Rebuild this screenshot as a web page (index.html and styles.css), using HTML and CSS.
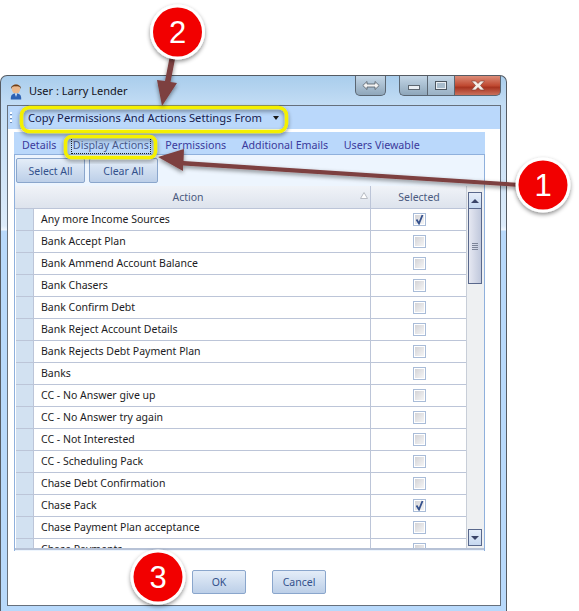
FILE: index.html
```html
<!DOCTYPE html>
<html lang="en">
<head>
<meta charset="utf-8">
<title>User : Larry Lender</title>
<link rel="stylesheet" href="styles.css">
</head>
<body>
<div class="window">
  <div class="titlebar">
    <svg class="app-icon" width="12" height="17" viewBox="0 0 12 17"><ellipse cx="6" cy="6" rx="4.200" ry="4.600" fill="#eab88c"/><path d="M1 6C.5 0 11.500 0 11 6 10 3.500 8 3 6 3.500 4 3 2 3.500 1 6z" fill="#6e3f18"/><path d="M.8 16.500C.5 12 2.500 10.500 6 10.500s5.500 1.500 5.200 6z" fill="#2e62b4"/><path d="M5 10.500h2l-1 3.500z" fill="#fff"/></svg>
    <span class="title">User : Larry Lender</span>
    <div class="help-btn"><svg width="18" height="11" viewBox="0 0 18 11"><path d="M.8 5.500 5 1.500V4h8V1.500l4.200 4-4.200 4V7H5v2.500z" fill="#f2f2f2" stroke="#505a66" stroke-width=".8"/></svg></div>
    <div class="win-btns">
      <div class="wb wb-min"><span class="min-glyph"></span></div>
      <div class="wb wb-max"><span class="max-glyph"></span></div>
      <div class="wb wb-close"><svg width="16" height="11" viewBox="0 0 16 11"><path d="M1.500 1h4L8 3.500 10.500 1h4L10.500 5.500l4 4.500h-4L8 7.500 5.500 10h-4l4-4.500z" fill="#f4eee8" stroke="#7a3a30" stroke-width=".6"/></svg></div>
    </div>
  </div>
  <div class="client">
    <div class="toolbar">
      <span class="grip"></span>
      <span class="copy-menu">Copy Permissions And Actions Settings From</span>
      <span class="caret"></span>
    </div>
    <div class="tabs-wrap">
      <div class="tabs">
        <span class="tab">Details</span>
        <span class="tab tab-active"><span class="focus">Display Actions</span></span>
        <span class="tab">Permissions</span>
        <span class="tab">Additional Emails</span>
        <span class="tab">Users Viewable</span>
      </div>
      <div class="panel">
        <div class="panel-btns">
          <button class="btn btn-panel">Select All</button>
          <button class="btn btn-panel">Clear All</button>
        </div>
        <div class="grid">
          <div class="grid-main">
            <div class="row row-head">
              <div class="cell-ind head-ind"></div>
              <div class="cell-action head-cell head-action">Action<svg class="sort" width="8" height="7" viewBox="0 0 8 7"><path d="M4 .5 7.500 6.500H.5z" fill="#fff" stroke="#b8bcc4"/></svg></div>
              <div class="cell-sel head-cell">Selected</div>
            </div>
            <div class="rows">
              <div class="row"><div class="cell-ind"></div><div class="cell-action">Any more Income Sources</div><div class="cell-sel"><span class="check checked"><svg width="11" height="11" viewBox="0 0 11 11"><path d="M2.500 5.500 5 9.500 8.500 1" fill="none" stroke="#34508c" stroke-width="1.800"/></svg></span></div></div>
              <div class="row"><div class="cell-ind"></div><div class="cell-action">Bank Accept Plan</div><div class="cell-sel"><span class="check"></span></div></div>
              <div class="row"><div class="cell-ind"></div><div class="cell-action">Bank Ammend Account Balance</div><div class="cell-sel"><span class="check"></span></div></div>
              <div class="row"><div class="cell-ind"></div><div class="cell-action">Bank Chasers</div><div class="cell-sel"><span class="check"></span></div></div>
              <div class="row"><div class="cell-ind"></div><div class="cell-action">Bank Confirm Debt</div><div class="cell-sel"><span class="check"></span></div></div>
              <div class="row"><div class="cell-ind"></div><div class="cell-action">Bank Reject Account Details</div><div class="cell-sel"><span class="check"></span></div></div>
              <div class="row"><div class="cell-ind"></div><div class="cell-action">Bank Rejects Debt Payment Plan</div><div class="cell-sel"><span class="check"></span></div></div>
              <div class="row"><div class="cell-ind"></div><div class="cell-action">Banks</div><div class="cell-sel"><span class="check"></span></div></div>
              <div class="row"><div class="cell-ind"></div><div class="cell-action">CC - No Answer give up</div><div class="cell-sel"><span class="check"></span></div></div>
              <div class="row"><div class="cell-ind"></div><div class="cell-action">CC - No Answer try again</div><div class="cell-sel"><span class="check"></span></div></div>
              <div class="row"><div class="cell-ind"></div><div class="cell-action">CC - Not Interested</div><div class="cell-sel"><span class="check"></span></div></div>
              <div class="row"><div class="cell-ind"></div><div class="cell-action">CC - Scheduling Pack</div><div class="cell-sel"><span class="check"></span></div></div>
              <div class="row"><div class="cell-ind"></div><div class="cell-action">Chase Debt Confirmation</div><div class="cell-sel"><span class="check"></span></div></div>
              <div class="row"><div class="cell-ind"></div><div class="cell-action">Chase Pack</div><div class="cell-sel"><span class="check checked"><svg width="11" height="11" viewBox="0 0 11 11"><path d="M2.500 5.500 5 9.500 8.500 1" fill="none" stroke="#34508c" stroke-width="1.800"/></svg></span></div></div>
              <div class="row"><div class="cell-ind"></div><div class="cell-action">Chase Payment Plan acceptance</div><div class="cell-sel"><span class="check"></span></div></div>
              <div class="row"><div class="cell-ind"></div><div class="cell-action">Chase Payments</div><div class="cell-sel"><span class="check"></span></div></div>
            </div>
          </div>
          <div class="scrollbar">
            <div class="sb-btn"><span class="tri-up"></span></div>
            <div class="sb-thumb"><span class="grip-lines"></span></div>
            <div class="sb-track"></div>
            <div class="sb-btn"><span class="tri-down"></span></div>
          </div>
        </div>
      </div>
    </div>
    <div class="footer">
      <button class="btn btn-foot">OK</button>
      <button class="btn btn-foot">Cancel</button>
    </div>
  </div>
</div>

<svg class="overlay" width="579" height="611" viewBox="0 0 579 611">
  <defs>
    <filter id="sh" x="-30%" y="-30%" width="160%" height="160%"><feDropShadow dx="0" dy="2" stdDeviation="2" flood-color="#000" flood-opacity=".45"/></filter>
  </defs>
  <rect x="21.500" y="107.500" width="265" height="24" rx="8" fill="none" stroke="#f4f000" stroke-width="3.500" filter="url(#sh)"/>
  <rect x="65.500" y="136.500" width="90" height="21" rx="6" fill="none" stroke="#f4f000" stroke-width="3.500" filter="url(#sh)"/>
  <path d="M169.500 58 175 59 170.500 82 177 83 162 106 157 80 165 81z" fill="#7d3f3f" filter="url(#sh)"/>
  <path d="M520 187 183 165.500 183 171 158 157 184 149 183.500 161 520 183z" fill="#7d3f3f" filter="url(#sh)"/>
  <g filter="url(#sh)"><circle cx="177.500" cy="32" r="27.500" fill="#fff"/><circle cx="177.500" cy="32" r="24.500" fill="#f20000"/></g>
  <g filter="url(#sh)"><circle cx="543" cy="185" r="27.500" fill="#fff"/><circle cx="543" cy="185" r="24.500" fill="#f20000"/></g>
  <g filter="url(#sh)"><circle cx="158" cy="577" r="27.500" fill="#fff"/><circle cx="158" cy="577" r="24.500" fill="#f20000"/></g>
  <text class="num" x="177.500" y="43">2</text>
  <text class="num" x="543" y="196">1</text>
  <text class="num" x="158" y="588">3</text>
</svg>
</body>
</html>
```

FILE: styles.css
```css
* { box-sizing: border-box; }
html, body { margin: 0; padding: 0; height: 611px; overflow: hidden; background: #fff; }
body { padding-top: 75px; font-family: "Noto Sans", "Liberation Sans", sans-serif; font-size: 10.5px; color: #1e1e28; position: relative; }

.window {
  width: 507px; height: 536px; padding: 0 5px 5px 6px;
  border: 1px solid #555b63; border-bottom: 0; border-radius: 7px 7px 0 0;
  background: linear-gradient(180deg, #a9cdec 0, #c2dcf4 28px, #dcebfa 150px, #eef6fe 154px, #b8d9fb 155px, #b8d9fb 100%);
  display: flex; flex-direction: column;
}
.titlebar { height: 29px; display: flex; align-items: flex-start; flex: none; position: relative; }
.app-icon { margin: 7px 0 0 3px; flex: none; }
.title { margin: 6px 0 0 7px; font-size: 11px; line-height: 18px; color: #14141c; }
.help-btn {
  margin-left: auto; width: 31px; height: 20px;
  border: 1px solid #5a6672; border-top: 0; border-radius: 0 0 5px 5px;
  background: linear-gradient(180deg, #c3d6e6, #8fa6ba);
  display: flex; align-items: center; justify-content: center;
}
.win-btns { margin-left: 13px; display: flex; height: 20px; }
.wb { border: 1px solid #5a6672; border-top: 0; display: flex; align-items: center; justify-content: center; }
.wb-min { width: 28px; border-radius: 0 0 0 5px; border-right: 0; background: linear-gradient(180deg, #c3d6e6, #8ea6ba); }
.wb-max { width: 27px; border-right: 0; background: linear-gradient(180deg, #c3d6e6, #9ab1c4); }
.wb-close { width: 47px; border-radius: 0 0 5px 0; background: linear-gradient(180deg, #dc8c78 0, #c04a32 50%, #a83420 60%, #c9705c 100%); }
.min-glyph { width: 12px; height: 5px; margin-top: 4px; background: #e9eef3; border: 1px solid #5c6670; }
.max-glyph { width: 12px; height: 9px; border: 1px solid #4c5660; box-shadow: inset 0 0 0 1px #e9eef3; background: #a8bccc; }

.client { width: 494px; flex: 1; background: #fff; border: 1px solid #66707c; display: flex; flex-direction: column; }
.toolbar { height: 23px; flex: none; background: #bad8fb; display: flex; align-items: center; padding-left: 2px; color: #18204c; }
.grip { width: 2px; height: 12px; background: repeating-linear-gradient(180deg, #fff 0 2px, #6f8fbc 2px 3px, transparent 3px 4px); }
.copy-menu { margin-left: 16px; white-space: nowrap; font-size: 11.2px; }
.caret { margin-left: 11px; border: 3px solid transparent; border-top: 4px solid #1a1a1a; border-bottom: 0; }

.tabs-wrap { margin: 3px 0 0 6px; width: 471px; flex: none; background: #bad8fb; }
.tabs { height: 22px; display: flex; align-items: center; padding: 4px 0 0 8px; color: #3a3a9c; white-space: nowrap; font-size: 10.7px; }
.tab { margin-right: 15.5px; line-height: 16px; }
.tab-active { color: #4a5a8c; }
.focus { outline: 1px dotted #222; padding: 1px; display: block; line-height: 14px; }

.panel { height: 397px; background: #edf5fe; border: 1px solid #8fb0dc; border-bottom: 0; overflow: hidden; }
.panel-btns { display: flex; gap: 4px; padding: 3px 0 0 1px; height: 31px; }
.btn {
  font: inherit; color: #33518c; border: 1px solid #8aa6cc; border-radius: 2px;
  background: linear-gradient(180deg, #e4edf8 0, #d0def0 50%, #bccfe8 100%);
  padding: 0; cursor: default;
}
.btn-panel { width: 69px; height: 25px; }
.grid { height: 364px; width: 469px; border-bottom: 2px solid #b7c2d6; display: flex; background: #fff; }
.grid-main { width: 451px; padding-left: 1px; overflow: hidden; }
.row { display: flex; height: 22px; border-bottom: 1px solid #bcc5d8; }
.row-head { height: 23px; margin-left: -1px; background: linear-gradient(180deg, #f0f3f8 0, #dde3ed 100%); color: #4a5a80; }
.rows { height: 339px; overflow: hidden; }
.cell-ind { width: 18px; flex: none; background: #d2e1f1; border-right: 1px solid #bcc5d8; }
.head-ind { width: 19px; background: none; border-right: 0; }
.cell-action { width: 337px; flex: none; padding-left: 7px; line-height: 21px; border-right: 1px solid #bcc5d8; white-space: nowrap; position: relative; color: #1c1c24; }
.cell-sel { flex: 1; display: flex; align-items: center; justify-content: center; padding-left: 1px; }
.head-cell { text-align: center; line-height: 22px; color: #4a5a80; }
.head-action { display: block; padding: 0 28px 0 0; }
.sort { position: absolute; right: 2px; top: 6px; }
.check {
  width: 13px; height: 13px; border: 1px solid #a9bcd8;
  background: linear-gradient(135deg, #d0d0d4 0, #f8f8f8 100%);
  box-shadow: inset 0 0 0 1px #fff; display: block; position: relative;
}
.check svg { position: absolute; left: 0; top: 0; }

.scrollbar { width: 18px; flex: none; background: #eef0f2; border-left: 1px solid #c8ced8; padding: 6px 2px 2px 1px; display: flex; flex-direction: column; height: 362px; }
.sb-btn { height: 17px; flex: none; border: 1px solid #59688c; background: linear-gradient(180deg, #e6eefa, #c6d8f0); display: flex; align-items: center; justify-content: center; }
.tri-up { border: 4px solid transparent; border-bottom: 4px solid #3a4468; border-top: 0; }
.tri-down { border: 4px solid transparent; border-top: 4px solid #3a4468; border-bottom: 0; }
.sb-thumb { height: 75px; flex: none; border: 1px solid #59688c; border-top: 0; background: linear-gradient(90deg, #e6e8f2, #c0c8dc); display: flex; align-items: center; justify-content: center; }
.grip-lines { width: 6px; height: 7px; background: repeating-linear-gradient(180deg, #7c8498 0 1px, transparent 1px 2px); }
.sb-track { flex: 1; }

.footer { flex: 1; display: flex; gap: 26px; padding: 19px 0 0 184px; }
.btn-foot { width: 54px; height: 24px; }

.overlay { position: absolute; left: 0; top: 0; pointer-events: none; }
.num { font-family: "Liberation Sans", sans-serif; font-size: 31px; fill: #fff; text-anchor: middle; }
```
